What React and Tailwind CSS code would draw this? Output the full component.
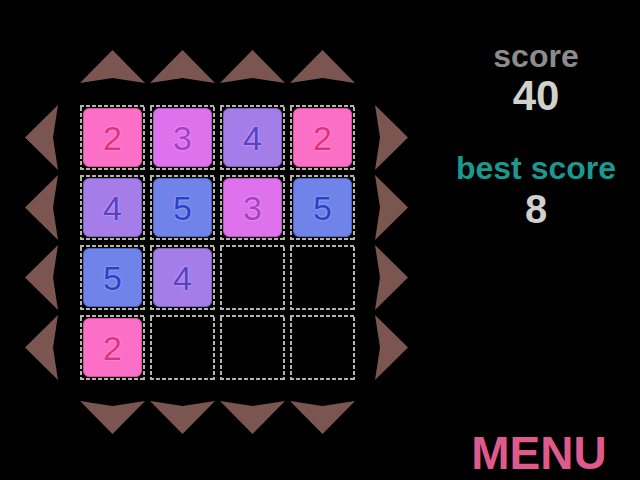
import React from "react";

const board = [
  [2, 3, 4, 2],
  [4, 5, 3, 5],
  [5, 4, 0, 0],
  [2, 0, 0, 0],
];

const tileStyles = {
  2: "bg-[#fc6fc6] border-[#d94f9f] text-[#e2307c] [text-shadow:0_0_2px_#ffc6e6]",
  3: "bg-[#de72ec] border-[#b553c6] text-[#a83fc6] [text-shadow:0_0_2px_#f6c8ff]",
  4: "bg-[#a47de9] border-[#7f5bc4] text-[#5b3fc4] [text-shadow:0_0_2px_#dccbff]",
  5: "bg-[#6f83e9] border-[#4d5fc4] text-[#2b40c8] [text-shadow:0_0_2px_#c8d2ff]",
};

const ARROW = "#7b5650";

function UpArrow() {
  return (
    <svg width="65" height="33" viewBox="0 0 65 33">
      <path d="M0 33 L32.5 0 L65 33 L32.5 28 Z" fill={ARROW} />
    </svg>
  );
}
function DownArrow() {
  return (
    <svg width="65" height="33" viewBox="0 0 65 33">
      <path d="M0 0 L32.5 33 L65 0 L32.5 5 Z" fill={ARROW} />
    </svg>
  );
}
function LeftArrow() {
  return (
    <svg width="33" height="65" viewBox="0 0 33 65">
      <path d="M33 0 L0 32.5 L33 65 L28 32.5 Z" fill={ARROW} />
    </svg>
  );
}
function RightArrow() {
  return (
    <svg width="33" height="65" viewBox="0 0 33 65">
      <path d="M0 0 L33 32.5 L0 65 L5 32.5 Z" fill={ARROW} />
    </svg>
  );
}

function Cell({ v }) {
  return (
    <div className="w-[65px] h-[65px] p-[3px] [background:linear-gradient(90deg,#b4b6a8_4px,transparent_4px)_0_0/6px_2px_repeat-x,linear-gradient(90deg,#b4b6a8_4px,transparent_4px)_0_100%/6px_2px_repeat-x,linear-gradient(0deg,#b4b6a8_4px,transparent_4px)_0_0/2px_6px_repeat-y,linear-gradient(0deg,#b4b6a8_4px,transparent_4px)_100%_0/2px_6px_repeat-y]">
      {v ? (
        <div
          className={`w-full h-full rounded-[6px] border flex items-center justify-center text-[34px] leading-none ${tileStyles[v]}`}
        >
          {v}
        </div>
      ) : null}
    </div>
  );
}

export default function App() {
  return (
    <div
      className="w-[640px] h-[480px] bg-black flex overflow-hidden"
      style={{ fontFamily: '"Liberation Sans", Arial, sans-serif' }}
    >
      <div className="w-[440px] flex flex-col pt-[50px]">
        <div className="flex gap-[5px] pl-[80px]">
          <UpArrow />
          <UpArrow />
          <UpArrow />
          <UpArrow />
        </div>
        <div className="flex mt-[22px] pl-[25px]">
          <div className="flex flex-col gap-[5px]">
            <LeftArrow />
            <LeftArrow />
            <LeftArrow />
            <LeftArrow />
          </div>
          <div className="grid grid-cols-4 gap-[5px] ml-[22px]">
            {board.flat().map((v, i) => (
              <Cell key={i} v={v} />
            ))}
          </div>
          <div className="flex flex-col gap-[5px] ml-[20px]">
            <RightArrow />
            <RightArrow />
            <RightArrow />
            <RightArrow />
          </div>
        </div>
        <div className="flex gap-[5px] pl-[80px] mt-[21px]">
          <DownArrow />
          <DownArrow />
          <DownArrow />
          <DownArrow />
        </div>
      </div>
      <div className="flex-1 flex flex-col items-center pt-[40px] pb-[4px] pr-[8px] font-bold">
        <div className="text-[32px] leading-none text-[#8c8c8c]">score</div>
        <div className="text-[42px] leading-none text-[#d0d0cc] mt-[3px]">40</div>
        <div className="text-[32px] leading-none text-[#1a9990] mt-[35px]">best score</div>
        <div className="text-[40px] leading-none text-[#d0d0cc] mt-[5px]">8</div>
        <div className="mt-auto text-[46px] leading-none text-[#dd5a8a] pl-[6px]">MENU</div>
      </div>
    </div>
  );
}
